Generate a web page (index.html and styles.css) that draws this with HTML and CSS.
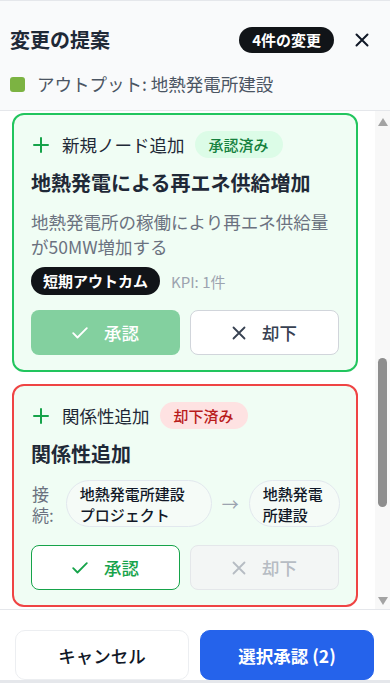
FILE: index.html
```html
<!DOCTYPE html>
<html lang="ja">
<head>
<meta charset="utf-8">
<title>変更の提案</title>
<link rel="stylesheet" href="styles.css">
</head>
<body>
<div class="sheet">
  <header class="head">
    <div class="head-row">
      <h1 class="title">変更の提案</h1>
      <span class="count">4件の変更</span>
      <button class="close" aria-label="閉じる">
        <svg viewBox="0 0 14 14" width="14" height="14"><path d="M1.5 1.5l11 11M12.5 1.5l-11 11" stroke="currentColor" stroke-width="2" stroke-linecap="round" fill="none"/></svg>
      </button>
    </div>
    <div class="target"><span class="dot"></span>アウトプット: 地熱発電所建設</div>
  </header>

  <div class="body">
  <main class="scroll" id="list">
    <article class="card card-plain">
      <div class="card-head">
        <svg class="plus" viewBox="0 0 18 18"><path d="M9 2v14M2 9h14" stroke="currentColor" stroke-width="2" stroke-linecap="round" fill="none"/></svg>
        <span class="kind">新規ノード追加</span>
      </div>
      <h2 class="card-title">地熱発電所建設プロジェクト</h2>
      <p class="desc">地熱発電所の建設を2025年度までに完了し、再生可能エネルギーの供給体制を整える</p>
      <div class="tags"><span class="tag">活動</span><span class="meta">KPI: 2件</span></div>
      <div class="actions">
        <button class="act act-approve">
          <svg viewBox="0 0 16 12" width="16" height="12"><path d="M1.2 6.2l4.3 4.3L14.8 1.2" stroke="currentColor" stroke-width="1.8" stroke-linecap="round" stroke-linejoin="round" fill="none"/></svg>承認</button>
        <button class="act act-reject">
          <svg viewBox="0 0 14 14" width="14" height="14"><path d="M1.5 1.5l11 11M12.5 1.5l-11 11" stroke="currentColor" stroke-width="1.8" stroke-linecap="round" fill="none"/></svg>却下</button>
      </div>
    </article>

    <article class="card card-plain">
      <div class="card-head">
        <svg class="plus" viewBox="0 0 18 18"><path d="M9 2v14M2 9h14" stroke="currentColor" stroke-width="2" stroke-linecap="round" fill="none"/></svg>
        <span class="kind">関係性追加</span>
      </div>
      <h2 class="card-title">関係性追加</h2>
      <div class="conn">
        <span class="conn-label">接続:</span>
        <span class="node node-src">地熱発電所建設プロジェクト</span>
        <span class="arrow">→</span>
        <span class="node node-dst">地熱発電所建設</span>
      </div>
      <div class="actions">
        <button class="act act-approve">
          <svg viewBox="0 0 16 12" width="16" height="12"><path d="M1.2 6.2l4.3 4.3L14.8 1.2" stroke="currentColor" stroke-width="1.8" stroke-linecap="round" stroke-linejoin="round" fill="none"/></svg>承認</button>
        <button class="act act-reject">
          <svg viewBox="0 0 14 14" width="14" height="14"><path d="M1.5 1.5l11 11M12.5 1.5l-11 11" stroke="currentColor" stroke-width="1.8" stroke-linecap="round" fill="none"/></svg>却下</button>
      </div>
    </article>

    <article class="card card-plain">
      <div class="card-head">
        <svg class="plus" viewBox="0 0 18 18"><path d="M9 2v14M2 9h14" stroke="currentColor" stroke-width="2" stroke-linecap="round" fill="none"/></svg>
        <span class="kind">新規ノード追加</span>
      </div>
      <h2 class="card-title">地域雇用の創出</h2>
      <p class="desc">建設・運営により雇用が生まれる</p>
      <div class="tags"><span class="tag">中期アウトカム</span><span class="meta">KPI: 1件</span></div>
      <div class="actions">
        <button class="act act-approve">
          <svg viewBox="0 0 16 12" width="16" height="12"><path d="M1.2 6.2l4.3 4.3L14.8 1.2" stroke="currentColor" stroke-width="1.8" stroke-linecap="round" stroke-linejoin="round" fill="none"/></svg>承認</button>
        <button class="act act-reject">
          <svg viewBox="0 0 14 14" width="14" height="14"><path d="M1.5 1.5l11 11M12.5 1.5l-11 11" stroke="currentColor" stroke-width="1.8" stroke-linecap="round" fill="none"/></svg>却下</button>
      </div>
    </article>

    <article class="card card-ok" id="focus">
      <div class="card-head">
        <svg class="plus" viewBox="0 0 18 18"><path d="M9 2v14M2 9h14" stroke="currentColor" stroke-width="2" stroke-linecap="round" fill="none"/></svg>
        <span class="kind">新規ノード追加</span>
        <span class="status status-ok">承認済み</span>
      </div>
      <h2 class="card-title">地熱発電による再エネ供給増加</h2>
      <p class="desc">地熱発電所の稼働により再エネ供給量が50MW増加する</p>
      <div class="tags"><span class="tag">短期アウトカム</span><span class="meta">KPI: 1件</span></div>
      <div class="actions">
        <button class="act act-approve-done">
          <svg viewBox="0 0 16 12" width="16" height="12"><path d="M1.2 6.2l4.3 4.3L14.8 1.2" stroke="currentColor" stroke-width="1.8" stroke-linecap="round" stroke-linejoin="round" fill="none"/></svg>承認</button>
        <button class="act act-reject">
          <svg viewBox="0 0 14 14" width="14" height="14"><path d="M1.5 1.5l11 11M12.5 1.5l-11 11" stroke="currentColor" stroke-width="1.8" stroke-linecap="round" fill="none"/></svg>却下</button>
      </div>
    </article>

    <article class="card card-ng">
      <div class="card-head">
        <svg class="plus" viewBox="0 0 18 18"><path d="M9 2v14M2 9h14" stroke="currentColor" stroke-width="2" stroke-linecap="round" fill="none"/></svg>
        <span class="kind">関係性追加</span>
        <span class="status status-ng">却下済み</span>
      </div>
      <h2 class="card-title">関係性追加</h2>
      <div class="conn">
        <span class="conn-label">接続:</span>
        <span class="node node-src">地熱発電所建設プロジェクト</span>
        <span class="arrow">→</span>
        <span class="node node-dst">地熱発電所建設</span>
      </div>
      <div class="actions">
        <button class="act act-approve-outline">
          <svg viewBox="0 0 16 12" width="16" height="12"><path d="M1.2 6.2l4.3 4.3L14.8 1.2" stroke="currentColor" stroke-width="1.8" stroke-linecap="round" stroke-linejoin="round" fill="none"/></svg>承認</button>
        <button class="act act-reject-done">
          <svg viewBox="0 0 14 14" width="14" height="14"><path d="M1.5 1.5l11 11M12.5 1.5l-11 11" stroke="currentColor" stroke-width="1.8" stroke-linecap="round" fill="none"/></svg>却下</button>
      </div>
    </article>

    <article class="card card-plain">
      <div class="card-head">
        <svg class="plus" viewBox="0 0 18 18"><path d="M9 2v14M2 9h14" stroke="currentColor" stroke-width="2" stroke-linecap="round" fill="none"/></svg>
        <span class="kind">新規ノード追加</span>
      </div>
      <h2 class="card-title">CO2排出量の削減</h2>
      <p class="desc">化石燃料由来の電力を代替し年間排出量を削減する</p>
      <div class="tags"><span class="tag">長期アウトカム</span><span class="meta">KPI: 1件</span></div>
      <div class="actions">
        <button class="act act-approve">
          <svg viewBox="0 0 16 12" width="16" height="12"><path d="M1.2 6.2l4.3 4.3L14.8 1.2" stroke="currentColor" stroke-width="1.8" stroke-linecap="round" stroke-linejoin="round" fill="none"/></svg>承認</button>
        <button class="act act-reject">
          <svg viewBox="0 0 14 14" width="14" height="14"><path d="M1.5 1.5l11 11M12.5 1.5l-11 11" stroke="currentColor" stroke-width="1.8" stroke-linecap="round" fill="none"/></svg>却下</button>
      </div>
    </article>
  </main>
  <div class="rail" aria-hidden="true">
    <span class="rail-btn"><span class="tri-up"></span></span>
    <span class="rail-track"><span class="rail-thumb"></span></span>
    <span class="rail-btn"><span class="tri-down"></span></span>
  </div>
  </div>

  <footer class="foot">
    <button class="btn btn-cancel">キャンセル</button>
    <button class="btn btn-primary">選択承認 (2)</button>
  </footer>
</div>
<script src="script.js"></script>
</body>
</html>
```

FILE: styles.css
```css
* { box-sizing: border-box; }
html, body { margin: 0; padding: 0; }
body {
  background: #e5e7eb;
  font-family: "Noto Sans CJK JP", "Noto Sans", sans-serif;
  color: #1f2937;
}
button { font: inherit; cursor: pointer; }

.sheet {
  height: 680px;
  display: flex;
  flex-direction: column;
  background: #fff;
  border-top: 1px solid #e5e7eb;
}

.head {
  flex: none;
  background: #f9fafb;
  padding: 25px 12px 14px 10px;
  border-bottom: 1px solid #e5e7eb;
}
.head-row {
  display: flex;
  align-items: center;
  height: 28px;
  gap: 12px;
}
.title {
  flex: 1;
  margin: 0;
  font-size: 20px;
  line-height: 28px;
  font-weight: 700;
  color: #1f2937;
}
.count {
  background: #111418;
  color: #fff;
  font-size: 15px;
  font-weight: 700;
  height: 26px;
  line-height: 26px;
  padding: 0 13px;
  border-radius: 13px;
}
.close {
  width: 32px;
  height: 32px;
  border: 0;
  background: none;
  padding: 0;
  display: flex;
  align-items: center;
  justify-content: center;
  color: #111827;
}
.target {
  margin-top: 18px;
  display: flex;
  align-items: center;
  gap: 12px;
  font-size: 17.5px;
  line-height: 24px;
  color: #4b5563;
}
.dot {
  width: 15px;
  height: 15px;
  border-radius: 3px;
  background: #7cb342;
}

.body {
  flex: 1;
  min-height: 0;
  display: flex;
}
.scroll {
  flex: 1;
  min-width: 0;
  overflow: hidden;
  background: #fff;
  padding: 12px 17px 12px 12px;
  display: flex;
  flex-direction: column;
  gap: 12px;
}

.rail {
  flex: none;
  width: 15px;
  background: #f8f8f8;
  display: flex;
  flex-direction: column;
}
.rail-btn {
  flex: none;
  height: 16px;
  display: flex;
  align-items: center;
  justify-content: center;
}
.rail-btn:first-child { align-items: flex-end; padding-bottom: 1px; }
.rail-btn:last-child { align-items: flex-start; padding-top: 4px; }
.tri-up {
  width: 0;
  height: 0;
  border-left: 5px solid transparent;
  border-right: 5px solid transparent;
  border-bottom: 8px solid #a3a3a3;
}
.tri-down {
  width: 0;
  height: 0;
  border-left: 5px solid transparent;
  border-right: 5px solid transparent;
  border-top: 8px solid #a3a3a3;
}
.rail-track {
  flex: 1;
  display: flex;
  flex-direction: column;
  align-items: center;
}
.rail-thumb {
  margin-top: 231px;
  width: 9px;
  height: 149px;
  border-radius: 5px;
  background: #8e8e8e;
}

.card {
  flex: none;
  border: 2px solid #e5e7eb;
  border-radius: 12px;
  background: #f0fdf4;
  padding: 16px 17px 15px;
}
.card-plain { border-color: #d1d5db; background: #fff; }
.card-ok { border-color: #22c55e; }
.card-ng { border-color: #ef4444; }

.card-head {
  display: flex;
  align-items: center;
  height: 27px;
}
.plus {
  width: 18px;
  height: 18px;
  margin-left: 1px;
  margin-right: 12px;
  color: #16a34a;
}
.kind {
  font-size: 17.5px;
  color: #1f2937;
  margin-right: 10px;
}
.status {
  font-size: 15px;
  font-weight: 500;
  line-height: 27px;
  padding: 0 14px;
  border-radius: 14px;
}
.status-ok { background: #dcfce7; color: #15803d; }
.status-ng { background: #fee2e2; color: #b91c1c; }

.card-title {
  margin: 11px 0 0;
  font-size: 20px;
  line-height: 28px;
  font-weight: 700;
  color: #1f2937;
}
.desc {
  margin: 12px 0 0;
  font-size: 17.5px;
  line-height: 25px;
  color: #6b7280;
}
.tags {
  margin-top: 8px;
  display: flex;
  align-items: center;
  gap: 11px;
}
.tag {
  background: #111418;
  color: #fff;
  font-size: 15px;
  font-weight: 700;
  line-height: 28px;
  padding: 0 12px;
  border-radius: 14px;
}
.meta {
  font-size: 15px;
  color: #9ca3af;
}

.conn {
  margin-top: 12px;
  display: flex;
  align-items: center;
}
.conn-label {
  flex: none;
  width: min-content;
  margin-left: 1px;
  margin-right: 12px;
  font-size: 17px;
  line-height: 21px;
  color: #6b7280;
}
.node {
  flex: none;
  border: 1px solid #e2e8ee;
  background: #f5fbf7;
  border-radius: 24px;
  padding: 1.5px 13px;
  font-size: 15px;
  line-height: 21px;
  font-weight: 500;
  color: #111827;
}
.node-src { width: 146px; }
.node-dst { width: 91px; }
.arrow {
  flex: none;
  width: 17px;
  margin: 0 10px;
  font-size: 17px;
  color: #9ca3af;
  text-align: center;
}

.actions {
  margin-top: 15px;
  display: grid;
  grid-template-columns: 1fr 1fr;
  gap: 10px;
}
.conn + .actions { margin-top: 18px; }
.act {
  height: 45px;
  border-radius: 8px;
  border: 1px solid transparent;
  font-size: 17.5px;
  font-weight: 500;
  display: flex;
  align-items: center;
  justify-content: center;
  gap: 16px;
  padding: 0;
}
.act-approve { background: #16a34a; color: #fff; }
.act-reject { background: #fff; border-color: #d1d5db; color: #374151; }
.act-approve-done { background: #83d09f; color: #fff; }
.act-approve-outline { background: #fff; border-color: #16a34a; color: #16a34a; }
.act-reject-done { background: #f3f6f5; border-color: #e4e7ea; color: #b6bcc3; }

.foot {
  flex: none;
  border-top: 1px solid #e5e7eb;
  background: #fff;
  padding: 20px 16px 0 15px;
  display: grid;
  grid-template-columns: 1fr 1fr;
  gap: 11px;
}
.btn {
  height: 50px;
  border-radius: 10px;
  font-size: 17.5px;
}
.btn-cancel {
  background: #fff;
  border: 1px solid #eceef1;
  color: #111827;
  font-weight: 500;
}
.btn-primary {
  background: #2563eb;
  border: 1px solid #2563eb;
  color: #fff;
  font-weight: 700;
}
```

FILE: script.js
```js
var list = document.getElementById('list');
var focus = document.getElementById('focus');
list.scrollTop = focus.getBoundingClientRect().top - list.getBoundingClientRect().top - 2;
```
